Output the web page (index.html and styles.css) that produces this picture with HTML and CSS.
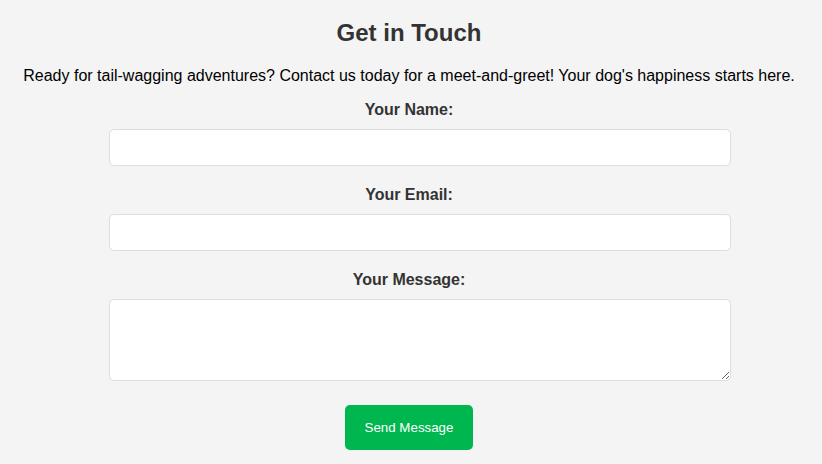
FILE: index.html
```html
<!DOCTYPE html>
<html>
<head>
<meta charset="utf-8">
<link rel="stylesheet" href="styles.css">
</head>
<body>
<section class="contact">
  <h2 class="title">Get in Touch</h2>
  <p class="intro">Ready for tail-wagging adventures? Contact us today for a meet-and-greet! Your dog's happiness starts here.</p>
  <form class="form">
    <label class="label" for="name">Your Name:</label>
    <input class="field" type="text" id="name">
    <label class="label" for="email">Your Email:</label>
    <input class="field" type="email" id="email">
    <label class="label" for="msg">Your Message:</label>
    <textarea class="field area" id="msg"></textarea>
    <button class="btn" type="button">Send Message</button>
  </form>
</section>
</body>
</html>
```
FILE: styles.css
```css
html, body {
  margin: 0;
  padding: 0;
  background: #f4f4f4;
}
body {
  font-family: "Liberation Sans", Arial, sans-serif;
  color: #000;
}
.contact {
  padding: 19px 4px 0 0;
  text-align: center;
}
.title {
  margin: 0;
  font-size: 24px;
  line-height: 28px;
  font-weight: bold;
  color: #333;
}
.intro {
  margin: 20px 0 16px;
  font-size: 16px;
  line-height: 18px;
}
.form {
  width: 600px;
  margin: 0 auto;
  text-align: center;
}
.label {
  display: block;
  font-size: 16px;
  line-height: 18px;
  font-weight: bold;
  color: #333;
  margin-bottom: 10px;
}
.field {
  display: block;
  box-sizing: content-box;
  width: 100%;
  height: 15px;
  padding: 10px;
  margin: 0 0 20px;
  border: 1px solid #ddd;
  border-radius: 5px;
  background: #fff;
  font-family: "Liberation Sans", Arial, sans-serif;
  font-size: 13px;
  outline: none;
}
.area {
  height: 60px;
  margin-bottom: 24px;
  resize: vertical;
}
.btn {
  display: inline-block;
  height: 45px;
  padding: 0 20px;
  border: 0;
  border-radius: 5px;
  background: #00b74f;
  color: #fff;
  font-family: "Liberation Sans", Arial, sans-serif;
  font-size: 13.333px;
  line-height: 45px;
  cursor: pointer;
}
```
